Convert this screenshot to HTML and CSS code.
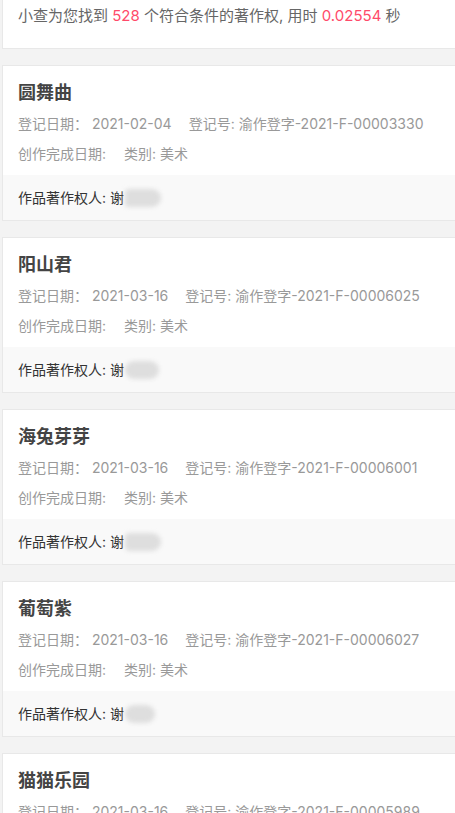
FILE: index.html
```html
<!DOCTYPE html>
<html lang="zh-CN">
<head>
<meta charset="utf-8">
<title>著作权查询</title>
<link rel="stylesheet" href="styles.css">
</head>
<body>
<div class="page">
  <div class="summary">
    小查为您找到 <span class="hl">528</span> 个符合条件的著作权, 用时 <span class="hl">0.02554</span> 秒
  </div>

  <div class="card">
    <div class="card-body">
      <div class="title">圆舞曲</div>
      <div class="row"><span class="cell">登记日期： 2021-02-04</span><span class="cell">登记号: 渝作登字-2021-F-00003330</span></div>
      <div class="row"><span class="cell wide">创作完成日期:</span><span class="cell">类别: 美术</span></div>
    </div>
    <div class="card-foot">作品著作权人: 谢<span class="mask m1"></span></div>
  </div>

  <div class="card">
    <div class="card-body">
      <div class="title">阳山君</div>
      <div class="row"><span class="cell">登记日期： 2021-03-16</span><span class="cell">登记号: 渝作登字-2021-F-00006025</span></div>
      <div class="row"><span class="cell wide">创作完成日期:</span><span class="cell">类别: 美术</span></div>
    </div>
    <div class="card-foot">作品著作权人: 谢<span class="mask m2"></span></div>
  </div>

  <div class="card">
    <div class="card-body">
      <div class="title">海兔芽芽</div>
      <div class="row"><span class="cell">登记日期： 2021-03-16</span><span class="cell">登记号: 渝作登字-2021-F-00006001</span></div>
      <div class="row"><span class="cell wide">创作完成日期:</span><span class="cell">类别: 美术</span></div>
    </div>
    <div class="card-foot">作品著作权人: 谢<span class="mask m3"></span></div>
  </div>

  <div class="card">
    <div class="card-body">
      <div class="title">葡萄紫</div>
      <div class="row"><span class="cell">登记日期： 2021-03-16</span><span class="cell">登记号: 渝作登字-2021-F-00006027</span></div>
      <div class="row"><span class="cell wide">创作完成日期:</span><span class="cell">类别: 美术</span></div>
    </div>
    <div class="card-foot">作品著作权人: 谢<span class="mask m4"></span></div>
  </div>

  <div class="card">
    <div class="card-body">
      <div class="title">猫猫乐园</div>
      <div class="row"><span class="cell">登记日期： 2021-03-16</span><span class="cell">登记号: 渝作登字-2021-F-00005989</span></div>
      <div class="row"><span class="cell wide">创作完成日期:</span><span class="cell">类别: 美术</span></div>
    </div>
    <div class="card-foot">作品著作权人: 谢<span class="mask m1"></span></div>
  </div>
</div>
</body>
</html>
```

FILE: styles.css
```css
html, body {
  margin: 0;
  padding: 0;
  background: #f3f3f3;
  overflow: hidden;
}
body {
  font-family: Inter, "Noto Sans CJK SC", sans-serif;
  font-size: 14px;
  color: #666;
}
.page {
  padding-left: 2px;
  margin-right: -20px;
}
.summary {
  background: #fff;
  border: 1px solid #e8e8e8;
  border-top: 0;
  padding: 6px 15px 22px 15px;
  font-size: 15px;
  line-height: 20px;
  color: #666;
  margin-bottom: 16px;
}
.hl {
  color: #ff4a6a;
}
.card {
  background: #fff;
  border: 1px solid #e8e8e8;
  margin-bottom: 16px;
}
.card-body {
  padding: 16px 15px 6px 15px;
}
.title {
  font-size: 18px;
  font-weight: bold;
  color: #444;
  line-height: 22px;
  margin-bottom: 5px;
}
.row {
  line-height: 30px;
  color: #999;
  display: flex;
}
.cell {
  margin-right: 17px;
  white-space: nowrap;
}
.cell.wide {
  margin-right: 18px;
}
.card-foot {
  background: #f9f9f9;
  padding: 13px 15px 12px 15px;
  line-height: 20px;
  color: #333;
  display: flex;
  align-items: center;
}
.mask {
  display: inline-block;
  height: 18px;
  background: #dedede;
  filter: blur(2px);
  margin-left: 1px;
}
.m1 { width: 36px; border-radius: 4px 10px 10px 4px; }
.m2 { width: 34px; border-radius: 12px; }
.m3 { width: 36px; border-radius: 6px 12px 12px 6px; }
.m4 { width: 30px; border-radius: 14px; }
```
